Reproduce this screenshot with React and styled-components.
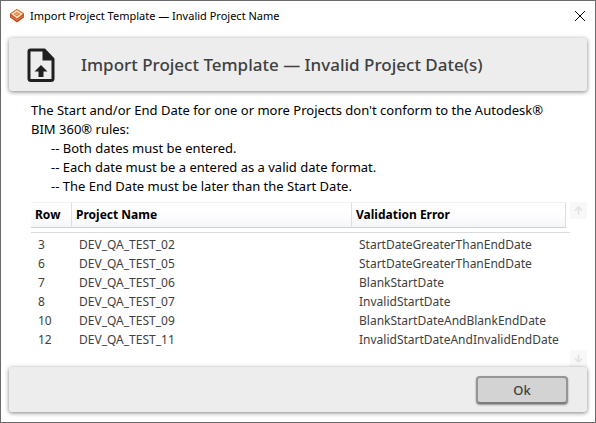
import React from "react";
import styled, { createGlobalStyle } from "styled-components";

const GlobalStyle = createGlobalStyle`
  *, *::before, *::after { box-sizing: border-box; }
  body { margin: 0; background: #fff; }
  button { font: inherit; padding: 0; border: 0; background: none; }
`;

const Dialog = styled.main`
  display: flex;
  flex-direction: column;
  min-height: 100vh;
  padding: 0 8px 10px;
  border: 1px solid #6a6a6a;
  background: #fff;
  color: #000;
  font-family: "Noto Sans", "Open Sans", sans-serif;
`;

const TitleBar = styled.header`
  display: flex;
  align-items: center;
  height: 29px;
  margin-bottom: 8px;
  font-size: 11px;
`;

const AppIcon = styled.svg`
  width: 16px;
  height: 16px;
  margin-right: 5px;
`;

const CloseButton = styled.button`
  display: flex;
  width: 12px;
  height: 12px;
  margin: 0 1px 0 auto;
`;

const Panel = styled.section`
  display: flex;
  align-items: center;
  justify-content: ${(p) => (p.$end ? "flex-end" : "flex-start")};
  height: ${(p) => (p.$end ? 45 : 53)}px;
  padding: 0 ${(p) => (p.$end ? 19 : 12)}px;
  border-radius: 3px;
  background: #ededed;
  box-shadow: 0 1px 4px rgba(0, 0, 0, 0.5);
`;

const FileIcon = styled.svg`
  width: 40px;
  height: 40px;
  margin-right: 20px;
`;

const Heading = styled.h1`
  margin: 0;
  color: #404040;
  font-size: 17px;
  font-weight: 500;
`;

const Message = styled.div`
  padding: 10px 16px 6px 22px;
  font-size: 13px;
  line-height: 19px;
`;

const Intro = styled.p`
  margin: 0;
`;

const Rules = styled.ul`
  margin: 0;
  padding: 0 0 0 20px;
  list-style: none;
`;

const Results = styled.div`
  display: flex;
  flex: 1;
  padding-left: 22px;
`;

const Table = styled.table`
  display: block;
  flex: 1;
  min-width: 0;
  color: #404040;
  font-size: 12px;
`;

const Head = styled.thead`
  display: block;
`;

const Body = styled.tbody`
  display: block;
  margin-top: 4px;
  padding-top: 2px;
  border-top: 1px solid #dcdcdc;
`;

const Row = styled.tr`
  display: grid;
  grid-template-columns: 41px minmax(0, 280fr) minmax(0, 218fr);
`;

const HeadCell = styled.th`
  height: 26px;
  padding: 0 4px;
  border-top: 1px solid #f1f1f1;
  border-right: 1px solid #dedfe1;
  border-bottom: 1px solid #d0d1d3;
  background: linear-gradient(#fff 40%, #f5f6f8);
  color: #000;
  font-weight: 700;
  line-height: 23px;
  text-align: left;

  &:last-child { margin-right: 4px; }
`;

const Cell = styled.td`
  padding: 0 7px;
  line-height: 19px;
  white-space: nowrap;
`;

const Scroller = styled.div`
  display: flex;
  flex-direction: column;
  justify-content: space-between;
`;

const ScrollButton = styled.button`
  display: flex;
  align-items: center;
  justify-content: center;
  width: 17px;
  height: 17px;
  background: #f8f8f8;
`;

const OkButton = styled.button`
  width: 92px;
  height: 28px;
  border: 2px solid #959595;
  border-bottom-color: #7c7c7c;
  border-radius: 4px;
  background: #d3d3d3;
  box-shadow: 0 1px 2px rgba(0, 0, 0, 0.4);
  color: #404040;
  font-size: 13px;
  font-weight: 500;
  line-height: 24px;
`;

const rules = [
  "-- Both dates must be entered.",
  "-- Each date must be a entered as a valid date format.",
  "-- The End Date must be later than the Start Date.",
];

const columns = ["Row", "Project Name", "Validation Error"];

const rows = [
  [3, "DEV_QA_TEST_02", "StartDateGreaterThanEndDate"],
  [6, "DEV_QA_TEST_05", "StartDateGreaterThanEndDate"],
  [7, "DEV_QA_TEST_06", "BlankStartDate"],
  [8, "DEV_QA_TEST_07", "InvalidStartDate"],
  [10, "DEV_QA_TEST_09", "BlankStartDateAndBlankEndDate"],
  [12, "DEV_QA_TEST_11", "InvalidStartDateAndInvalidEndDate"],
];

function Arrow({ down }) {
  return (
    <svg width="9" height="9" viewBox="0 0 9 9" fill="none" stroke="#e2e2e2" strokeWidth="1.6" aria-hidden="true">
      <path d={down ? "M4.5 0.5v7.5M1 4.5l3.5 3.5L8 4.5" : "M4.5 8.5V1M1 4.5L4.5 1 8 4.5"} />
    </svg>
  );
}

export default function App() {
  return (
    <>
      <GlobalStyle />
      <Dialog>
        <TitleBar>
          <AppIcon viewBox="0 0 16 16" aria-hidden="true">
            <path d="M1 5.500L8 1l7 4.500v4L8 14.500 1 9.500z" fill="#c24a1c" />
            <path d="M1 5.500L8 1l7 4.500L8 11z" fill="#e8833f" />
            <path d="M8 3l4.500 3L8 9.500 3.500 6z" fill="none" stroke="#fff1e2" strokeWidth="1.2" />
            <path d="M8 4.800l1.800 1.300L8 7.500 6.200 6.100z" fill="#f0a064" />
            <path d="M1.500 8L8 12l6.500-4" fill="none" stroke="#e9ab88" strokeWidth="0.6" />
          </AppIcon>
          Import Project Template — Invalid Project Name
          <CloseButton aria-label="Close">
            <svg width="12" height="12" viewBox="0 0 12 12" stroke="#000" strokeWidth="1" aria-hidden="true">
              <path d="M1 1l10 10M11 1L1 11" />
            </svg>
          </CloseButton>
        </TitleBar>

        <Panel>
          <FileIcon viewBox="0 0 40 40" aria-hidden="true">
            <path
              fill="#202020"
              fillRule="evenodd"
              d="M9.500 3.500H24l9.500 10V33.500a3.500 3.500 0 0 1-3.500 3.500H10a3.500 3.500 0 0 1-3.500-3.500V6.500a3 3 0 0 1 3-3zM9.500 6.500V34h21V15.500H21.500v-9z"
            />
            <path fill="#202020" d="M20 20l6.500 6.500h-4V32h-5v-5.500h-4z" />
          </FileIcon>
          <Heading>Import Project Template — Invalid Project Date(s)</Heading>
        </Panel>

        <Message>
          <Intro>
            The Start and/or End Date for one or more Projects don't conform to the Autodesk® BIM 360® rules:
          </Intro>
          <Rules>
            {rules.map((rule) => (
              <li key={rule}>{rule}</li>
            ))}
          </Rules>
        </Message>

        <Results>
          <Table>
            <Head>
              <Row>
                {columns.map((name) => (
                  <HeadCell key={name} scope="col">{name}</HeadCell>
                ))}
              </Row>
            </Head>
            <Body>
              {rows.map(([number, project, error]) => (
                <Row key={number}>
                  <Cell>{number}</Cell>
                  <Cell>{project}</Cell>
                  <Cell>{error}</Cell>
                </Row>
              ))}
            </Body>
          </Table>
          <Scroller>
            <ScrollButton aria-label="Scroll up"><Arrow /></ScrollButton>
            <ScrollButton aria-label="Scroll down"><Arrow down /></ScrollButton>
          </Scroller>
        </Results>

        <Panel as="footer" $end>
          <OkButton>Ok</OkButton>
        </Panel>
      </Dialog>
    </>
  );
}
